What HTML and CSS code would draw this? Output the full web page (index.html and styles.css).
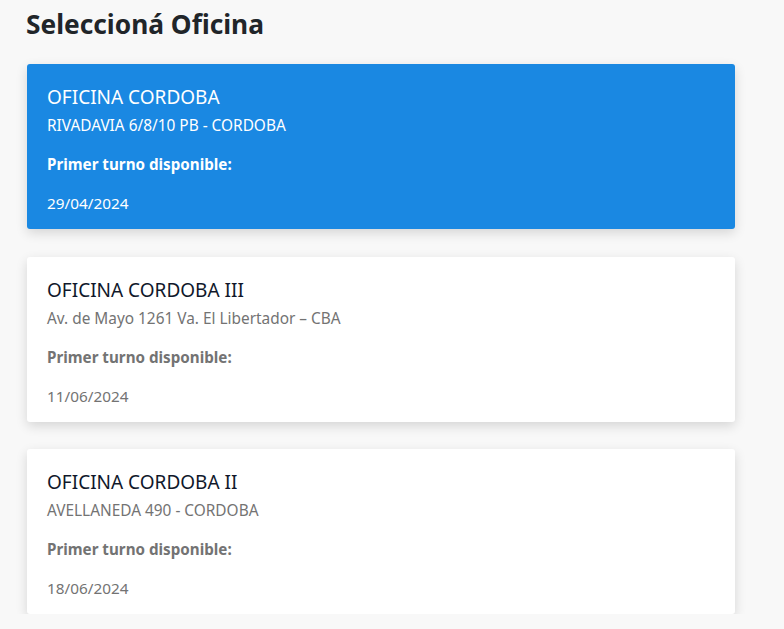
FILE: index.html
```html
<!DOCTYPE html>
<html lang="es">
<head>
<meta charset="utf-8">
<title>Seleccioná Oficina</title>
<link rel="stylesheet" href="styles.css">
</head>
<body>
<main class="page">
  <h1 class="heading">Seleccioná Oficina</h1>
  <div class="list">
    <div class="card card-active">
      <div class="card-title">OFICINA CORDOBA</div>
      <div class="card-address">RIVADAVIA 6/8/10 PB - CORDOBA</div>
      <div class="card-label">Primer turno disponible:</div>
      <div class="card-date">29/04/2024</div>
    </div>
    <div class="card">
      <div class="card-title">OFICINA CORDOBA III</div>
      <div class="card-address">Av. de Mayo 1261 Va. El Libertador – CBA</div>
      <div class="card-label">Primer turno disponible:</div>
      <div class="card-date">11/06/2024</div>
    </div>
    <div class="card">
      <div class="card-title">OFICINA CORDOBA II</div>
      <div class="card-address">AVELLANEDA 490 - CORDOBA</div>
      <div class="card-label">Primer turno disponible:</div>
      <div class="card-date">18/06/2024</div>
    </div>
  </div>
</main>
</body>
</html>
```
FILE: styles.css
```css
html, body {
  margin: 0;
  padding: 0;
  background: #f8f8f8;
  font-family: "Noto Sans", "Open Sans", sans-serif;
}
.page {
  padding: 6px 0 0 27px;
  width: 708px;
}
.heading {
  margin: 0 0 22px -1px;
  font-size: 26.3px;
  line-height: 36px;
  font-weight: 700;
  color: #212529;
}
.list {
  display: flex;
  flex-direction: column;
  gap: 27.5px;
}
.card {
  background: #ffffff;
  border-radius: 3px;
  box-shadow: 0 4px 12px rgba(0, 0, 0, 0.14);
  padding: 21px 20px 0;
  height: 165px;
  box-sizing: border-box;
  color: #737373;
}
.card-active {
  background: #1a88e2;
  color: #ffffff;
}
.card-title {
  font-size: 19px;
  line-height: 24px;
  color: #10182b;
}
.card-active .card-title {
  color: #ffffff;
}
.card-address {
  font-size: 15.4px;
  line-height: 20px;
  margin-top: 7px;
}
.card-label {
  font-size: 15.2px;
  font-weight: 700;
  line-height: 20px;
  margin-top: 18px;
}
.card-date {
  font-size: 15.3px;
  line-height: 20px;
  margin-top: 19px;
}
```
